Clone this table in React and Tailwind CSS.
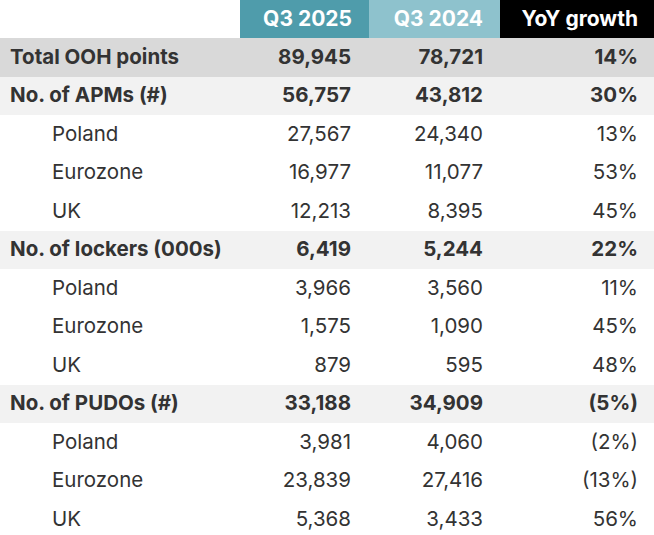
const rows = [
  { label: 'Total OOH points', a: '89,945', b: '78,721', c: '14%', kind: 'total' },
  { label: 'No. of APMs (#)', a: '56,757', b: '43,812', c: '30%', kind: 'group' },
  { label: 'Poland', a: '27,567', b: '24,340', c: '13%' },
  { label: 'Eurozone', a: '16,977', b: '11,077', c: '53%' },
  { label: 'UK', a: '12,213', b: '8,395', c: '45%' },
  { label: 'No. of lockers (000s)', a: '6,419', b: '5,244', c: '22%', kind: 'group' },
  { label: 'Poland', a: '3,966', b: '3,560', c: '11%' },
  { label: 'Eurozone', a: '1,575', b: '1,090', c: '45%' },
  { label: 'UK', a: '879', b: '595', c: '48%' },
  { label: 'No. of PUDOs (#)', a: '33,188', b: '34,909', c: '(5%)', kind: 'group' },
  { label: 'Poland', a: '3,981', b: '4,060', c: '(2%)' },
  { label: 'Eurozone', a: '23,839', b: '27,416', c: '(13%)' },
  { label: 'UK', a: '5,368', b: '3,433', c: '56%' },
];

export default function App() {
  return (
    <div className="w-[654px] h-[535px] overflow-hidden bg-white text-[#333333] font-['Inter',sans-serif]">
      {/* header */}
      <div className="grid grid-cols-[240px_129px_131px_1fr] h-[38px] text-[21px] font-bold text-white">
        <div />
        <div className="bg-[#4f9cab] flex items-center justify-end pr-[17px]">Q3 2025</div>
        <div className="bg-[#8ec2cd] flex items-center justify-end pr-[17px]">Q3 2024</div>
        <div className="bg-black flex items-center justify-end pr-[16px]">YoY growth</div>
      </div>
      {rows.map((r, i) => {
        const bold = r.kind === 'total' || r.kind === 'group';
        const bg = r.kind === 'total' ? 'bg-[#d9d9d9]' : r.kind === 'group' ? 'bg-[#f2f2f2]' : 'bg-white';
        return (
          <div
            key={i}
            className={`grid grid-cols-[240px_129px_131px_1fr] h-[38.5px] items-center text-[20.5px] ${bg} ${bold ? 'font-bold' : 'font-normal'}`}
          >
            <div className={bold ? 'pl-[10px]' : 'pl-[52px]'}>{r.label}</div>
            <div className="text-right pr-[18px]">{r.a}</div>
            <div className="text-right pr-[17px]">{r.b}</div>
            <div className="text-right pr-[16px]">{r.c}</div>
          </div>
        );
      })}
    </div>
  );
}
